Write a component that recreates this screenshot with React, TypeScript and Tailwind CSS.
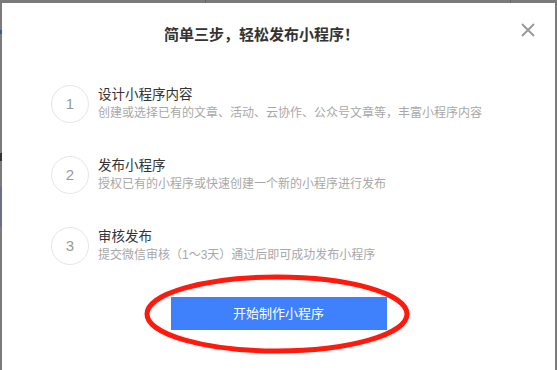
import React from "react";

const steps = [
  { n: "1", title: "设计小程序内容", desc: "创建或选择已有的文章、活动、云协作、公众号文章等，丰富小程序内容" },
  { n: "2", title: "发布小程序", desc: "授权已有的小程序或快速创建一个新的小程序进行发布" },
  { n: "3", title: "审核发布", desc: "提交微信审核（1～3天）通过后即可成功发布小程序" },
];

export default function App() {
  return (
    <div
      className="w-[557px] h-[370px] bg-[#7b7b7b] pl-[2px] pr-[2px] pt-[3px] overflow-hidden relative"
      style={{ fontFamily: '"Liberation Sans", "Noto Sans CJK SC", sans-serif' }}
    >
      {/* background hints behind mask */}
      <div className="absolute left-0 top-[30px] w-[2px] h-[4px] bg-[#3a5a9a]" />
      <div className="absolute left-0 top-[187px] w-[2px] h-[40px] bg-[#6a6f8a]" />
      <div className="absolute left-0 top-[153px] w-[2px] h-[8px] bg-[#333]" />
      <div className="absolute left-[205px] top-0 w-px h-[3px] bg-[#666]" />
      <div className="absolute left-[510px] top-0 w-px h-[3px] bg-[#666]" />

      <div className="relative bg-white h-[367px] w-[553px]">
        <div className="h-[65px] flex items-center justify-center pr-[34px]">
          <span className="text-[15px] font-bold text-[#333]">简单三步，轻松发布小程序！</span>
        </div>
        <svg
          className="absolute right-[20px] top-[20px]"
          width="14"
          height="14"
          viewBox="0 0 14 14"
        >
          <path d="M1 1L13 13M13 1L1 13" stroke="#9a9a9a" strokeWidth="2" />
        </svg>

        <div className="pl-[49px] pt-[17px] flex flex-col gap-[33px]">
          {steps.map((s) => (
            <div key={s.n} className="flex items-center h-[38px]">
              <div className="w-[38px] h-[38px] rounded-full border border-[#e6e6e6] flex items-center justify-center text-[15px] text-[#9a9a9a] shrink-0">
                {s.n}
              </div>
              <div className="ml-[9px] flex flex-col">
                <div className="text-[13.5px] leading-[19px] text-[#333]">{s.title}</div>
                <div className="text-[12px] leading-[19px] text-[#a8a8a8]">{s.desc}</div>
              </div>
            </div>
          ))}
        </div>

        <div className="mt-[32px] flex justify-center">
          <button className="w-[216px] h-[33px] bg-[#3f80fd] text-white text-[13px] flex items-center justify-center">
            开始制作小程序
          </button>
        </div>

        <svg
          className="absolute left-[138px] top-[268px] pointer-events-none"
          width="274"
          height="86"
          viewBox="0 0 274 86"
        >
          <ellipse cx="137" cy="43" rx="130" ry="37" fill="none" stroke="#ff1a0d" strokeWidth="5" />
        </svg>
      </div>
    </div>
  );
}
